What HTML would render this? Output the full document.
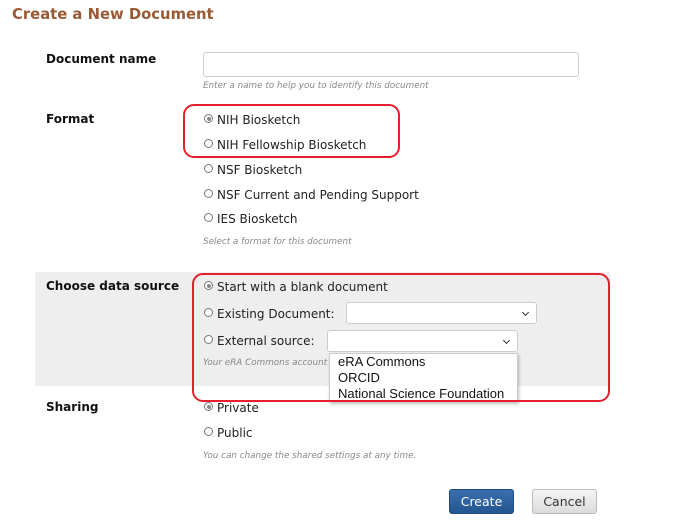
<!DOCTYPE html>
<html><head><meta charset="utf-8"><style>
*{margin:0;padding:0;box-sizing:border-box}
body{width:674px;height:524px;background:#fff;position:relative;overflow:hidden;font-family:"DejaVu Sans","Liberation Sans",sans-serif;font-size:12px;color:#222}
.a{position:absolute;white-space:nowrap;line-height:16px}
.lbl{font-weight:bold;font-size:12px;color:#111}
.hint{font-style:italic;font-size:8.8px;color:#888}
.r{position:absolute;width:9px;height:9px;border:1px solid #777;border-radius:50%;background:#fff}
.r.on::after{content:"";position:absolute;left:1.5px;top:1.5px;width:4px;height:4px;border-radius:50%;background:#888}
.sel{position:absolute;background:#fff;border:1px solid #ccc;border-radius:3px}
.sel::after{content:"";position:absolute;right:8px;top:7px;width:4px;height:4px;border-right:1.5px solid #333;border-bottom:1.5px solid #333;transform:rotate(45deg)}
.box{position:absolute;border:2px solid #e3202b;border-radius:11px}
</style></head><body>
<div class="a" style="left:12px;top:5px;font-size:14.8px;font-weight:bold;color:#985a35;line-height:20px">Create a New Document</div>

<div class="a lbl" style="left:46px;top:51px">Document name</div>
<div style="position:absolute;left:203px;top:52px;width:376px;height:25px;border:1px solid #ccc;border-radius:3px"></div>
<div class="a hint" style="left:203px;top:78px">Enter a name to help you to identify this document</div>

<div class="a lbl" style="left:46px;top:111px">Format</div>
<div class="r on" style="left:204px;top:114px"></div><div class="a" style="left:217px;top:112px">NIH Biosketch</div>
<div class="r" style="left:204px;top:139px"></div><div class="a" style="left:217px;top:137px">NIH Fellowship Biosketch</div>
<div class="r" style="left:204px;top:164px"></div><div class="a" style="left:217px;top:162px">NSF Biosketch</div>
<div class="r" style="left:204px;top:189px"></div><div class="a" style="left:217px;top:187px">NSF Current and Pending Support</div>
<div class="r" style="left:204px;top:213px"></div><div class="a" style="left:217px;top:211px">IES Biosketch</div>
<div class="a hint" style="left:203px;top:234px">Select a format for this document</div>
<div class="box" style="left:183px;top:104px;width:217px;height:54px"></div>

<div style="position:absolute;left:35px;top:272px;width:575px;height:114px;background:#eeeeee"></div>
<div class="a lbl" style="left:46px;top:278px">Choose data source</div>
<div class="r on" style="left:204px;top:281px"></div><div class="a" style="left:217px;top:279px">Start with a blank document</div>
<div class="r" style="left:204px;top:308px"></div><div class="a" style="left:217px;top:306px">Existing Document:</div>
<div class="sel" style="left:346px;top:302px;width:191px;height:22px"></div>
<div class="r" style="left:204px;top:335px"></div><div class="a" style="left:217px;top:333px">External source:</div>
<div class="sel" style="left:327px;top:330px;width:191px;height:22px"></div>
<div class="a hint" style="left:203px;top:355px">Your eRA Commons account</div>
<div style="position:absolute;left:329px;top:353px;width:189px;height:49px;background:#fff;border:1px solid #ccc;box-shadow:1px 2px 3px rgba(0,0,0,.25);font-family:'Liberation Sans',Arial,sans-serif;font-size:13px;color:#111">
<div style="position:absolute;left:8px;top:0;line-height:16px">eRA Commons</div>
<div style="position:absolute;left:8px;top:16px;line-height:16px">ORCID</div>
<div style="position:absolute;left:8px;top:32px;line-height:16px">National Science Foundation</div>
</div>
<div class="box" style="left:192px;top:273px;width:418px;height:129px"></div>

<div class="a lbl" style="left:46px;top:399px">Sharing</div>
<div class="r on" style="left:204px;top:402px"></div><div class="a" style="left:217px;top:400px">Private</div>
<div class="r" style="left:204px;top:427px"></div><div class="a" style="left:217px;top:425px">Public</div>
<div class="a hint" style="left:203px;top:448px">You can change the shared settings at any time.</div>

<div style="position:absolute;left:449px;top:489px;width:65px;height:25px;background:linear-gradient(#3a70ad,#24558f);border:1px solid #1f4a7e;border-radius:3px;color:#fff;text-align:center;line-height:23px;font-size:12.5px">Create</div>
<div style="position:absolute;left:532px;top:489px;width:65px;height:25px;background:linear-gradient(#f4f4f4,#dcdcdc);border:1px solid #bbb;border-radius:3px;color:#333;text-align:center;line-height:23px;font-size:12.5px">Cancel</div>
</body></html>
